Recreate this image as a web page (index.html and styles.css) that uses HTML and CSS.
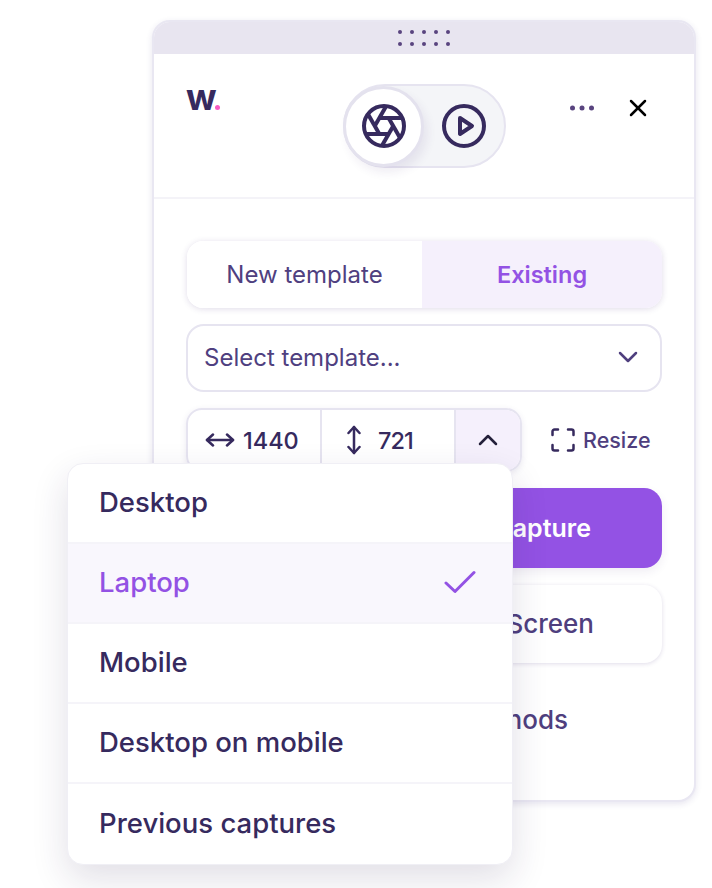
FILE: index.html
```html
<!DOCTYPE html>
<html lang="en">
<head>
  <meta charset="UTF-8">
  <meta name="viewport" content="width=device-width, initial-scale=1.0">
  <title>Capture panel</title>
  <link rel="stylesheet" href="styles.css">
</head>
<body>
  <div class="panel">
    <div class="drag-bar">
      <svg width="54" height="20" viewBox="0 0 54 20" fill="#59447f">
        <circle cx="3" cy="4" r="2"/><circle cx="15" cy="4" r="2"/><circle cx="27" cy="4" r="2"/><circle cx="39" cy="4" r="2"/><circle cx="51" cy="4" r="2"/>
        <circle cx="3" cy="16" r="2"/><circle cx="15" cy="16" r="2"/><circle cx="27" cy="16" r="2"/><circle cx="39" cy="16" r="2"/><circle cx="51" cy="16" r="2"/>
      </svg>
    </div>

    <div class="header">
      <div class="logo">w<span class="logo-dot"></span></div>

      <div class="mode-toggle">
        <div class="mode-knob">
          <svg class="mode-icon" viewBox="0 0 24 24">
            <circle cx="12" cy="12" r="10"/>
            <line x1="14.31" y1="8" x2="20.05" y2="17.94"/>
            <line x1="9.69" y1="8" x2="21.17" y2="8"/>
            <line x1="7.38" y1="12" x2="13.12" y2="2.06"/>
            <line x1="9.69" y1="16" x2="3.95" y2="6.06"/>
            <line x1="14.31" y1="16" x2="2.83" y2="16"/>
            <line x1="16.62" y1="12" x2="10.88" y2="21.94"/>
          </svg>
        </div>
        <div class="mode-other">
          <svg class="mode-icon" viewBox="0 0 24 24">
            <circle cx="12" cy="12" r="10"/>
            <polygon points="10 8 16 12 10 16"/>
          </svg>
        </div>
      </div>

      <div class="header-actions">
        <svg width="24" height="6" viewBox="0 0 24 6" fill="#59447f">
          <circle cx="2.500" cy="3" r="2.500"/><circle cx="12" cy="3" r="2.500"/><circle cx="21.500" cy="3" r="2.500"/>
        </svg>
        <svg class="close-icon" width="18" height="18" viewBox="0 0 18 18">
          <line x1="2" y1="2" x2="16" y2="16"/>
          <line x1="16" y1="2" x2="2" y2="16"/>
        </svg>
      </div>
    </div>

    <div class="content">
      <div class="tabs">
        <div class="tab">New template</div>
        <div class="tab tab-active">Existing</div>
      </div>

      <div class="select">
        <span>Select template...</span>
        <svg class="chevron" width="20" height="12" viewBox="0 0 20 12">
          <polyline points="2 2 10 10 18 2"/>
        </svg>
      </div>

      <div class="size-row">
        <div class="size-group">
          <div class="size-cell size-width">
            <svg class="size-icon" width="30" height="14" viewBox="0 0 30 14">
              <line x1="2" y1="7" x2="28" y2="7"/>
              <polyline points="8 1.500 2 7 8 12.500"/>
              <polyline points="22 1.500 28 7 22 12.500"/>
            </svg>
            <span>1440</span>
          </div>
          <div class="size-cell size-height">
            <svg class="size-icon" width="14" height="30" viewBox="0 0 14 30">
              <line x1="7" y1="2" x2="7" y2="28"/>
              <polyline points="1.500 8 7 2 12.500 8"/>
              <polyline points="1.500 22 7 28 12.500 22"/>
            </svg>
            <span class="size-narrow">721</span>
          </div>
          <div class="size-toggle">
            <svg class="chevron-up" width="20" height="12" viewBox="0 0 20 12">
              <polyline points="2 10 10 2 18 10"/>
            </svg>
          </div>
        </div>
        <div class="resize">
          <svg class="resize-icon" width="24" height="24" viewBox="0 0 24 24">
            <path d="M1.500 7V3.500a2 2 0 0 1 2-2H7"/>
            <path d="M17 1.500h3.500a2 2 0 0 1 2 2V7"/>
            <path d="M22.500 17v3.500a2 2 0 0 1-2 2H17"/>
            <path d="M7 22.500H3.500a2 2 0 0 1-2-2V17"/>
          </svg>
          <span>Resize</span>
        </div>
      </div>

      <div class="btn btn-primary">Capture</div>
      <div class="btn btn-secondary">Full Screen</div>
      <div class="btn-link">Other methods</div>
    </div>
  </div>

  <div class="dropdown">
    <div class="dropdown-item">Desktop</div>
    <div class="dropdown-item dropdown-item-active">
      <span>Laptop</span>
      <svg class="check" width="32" height="24" viewBox="0 0 32 24">
        <polyline points="2 13 11 21.500 30 2.500"/>
      </svg>
    </div>
    <div class="dropdown-item">Mobile</div>
    <div class="dropdown-item">Desktop on mobile</div>
    <div class="dropdown-item">Previous captures</div>
  </div>
</body>
</html>
```

FILE: styles.css
```css
* {
  box-sizing: border-box;
  margin: 0;
  padding: 0;
  font-family: 'Inter', sans-serif;
}

body {
  background: white;
  width: 712px;
  height: 888px;
  padding: 20px 0 0 152px;
  position: relative;
  overflow: hidden;
}

.panel {
  width: 544px;
  height: 782px;
  background: white;
  border: 2px solid #e9e7f2;
  border-radius: 18px;
  box-shadow: 0 2px 6px rgba(60, 40, 120, 0.12);
  overflow: hidden;
}

.drag-bar {
  height: 32px;
  background: #e8e5f0;
  display: flex;
  justify-content: center;
  align-items: center;
}

.header {
  height: 145px;
  border-bottom: 2px solid #f4f3f8;
  display: flex;
  align-items: flex-start;
  padding-top: 30px;
  padding-left: 32px;
}

.logo {
  width: 157px;
  height: 26px;
  display: flex;
  font-size: 36px;
  line-height: 26px;
  font-weight: 700;
  color: #362a5e;
  letter-spacing: -1px;
}

.logo-dot {
  width: 5px;
  height: 5px;
  margin-top: 21px;
  margin-left: -1px;
  border-radius: 50%;
  background: #f55cc4;
}

.mode-toggle {
  width: 163px;
  height: 84px;
  border: 2px solid #e6e4f0;
  border-radius: 42px;
  background: #f4f5f8;
  display: flex;
  align-items: center;
}

.mode-knob {
  width: 81px;
  height: 81px;
  margin-left: -2px;
  border: 3px solid #e4e2ee;
  border-radius: 50%;
  background: white;
  box-shadow: 4px 6px 10px rgba(60, 40, 120, 0.08);
  display: flex;
  justify-content: center;
  align-items: center;
}

.mode-other {
  flex: 1;
  display: flex;
  justify-content: center;
}

.mode-icon {
  width: 48px;
  height: 48px;
  fill: none;
  stroke: #362a5e;
  stroke-width: 2;
  stroke-linejoin: round;
}

.header-actions {
  display: flex;
  align-items: center;
  gap: 35px;
  margin-left: 64px;
  margin-top: 15px;
}

.close-icon line {
  stroke: black;
  stroke-width: 2.500;
  stroke-linecap: round;
}

.content {
  padding: 42px 32px 0 33px;
}

.tabs {
  height: 67px;
  display: flex;
  border-radius: 16px;
  overflow: hidden;
  box-shadow: 0 1px 6px rgba(60, 40, 120, 0.16);
}

.tab {
  display: flex;
  justify-content: center;
  align-items: center;
  font-size: 24px;
  font-weight: 400;
  color: #4f4080;
  background: white;
  width: 235px;
}

.tab-active {
  flex: 1;
  background: #f5f0fc;
  color: #9352e4;
  font-size: 23.500px;
  font-weight: 600;
}

.select {
  height: 68px;
  margin-top: 16px;
  margin-left: -1px;
  border: 2px solid #e6e4f0;
  border-radius: 18px;
  display: flex;
  justify-content: space-between;
  align-items: center;
  padding: 0 22px 2px 16px;
  font-size: 24px;
  font-weight: 400;
  color: #4f4080;
}

.chevron polyline,
.chevron-up polyline {
  fill: none;
  stroke-width: 2.500;
  stroke-linecap: round;
  stroke-linejoin: round;
}

.chevron polyline {
  stroke: #4f3f7e;
}

.chevron-up polyline {
  stroke: #24203a;
}

.size-row {
  height: 64px;
  margin-top: 16px;
  display: flex;
  align-items: stretch;
}

.size-group {
  width: 336px;
  margin-left: -1px;
  display: flex;
  border: 2px solid #e6e4f0;
  border-radius: 16px;
  overflow: hidden;
  box-shadow: 0 2px 6px rgba(60, 40, 120, 0.1);
}

.size-cell {
  display: flex;
  align-items: center;
  border-right: 2px solid #e6e4f0;
  font-size: 23.500px;
  font-weight: 500;
  color: #362a5e;
}

.size-width {
  width: 134px;
  gap: 8px;
  padding-left: 17px;
}

.size-height {
  width: 134px;
  gap: 17px;
  padding-left: 25px;
}

.size-narrow {
  letter-spacing: -1px;
}

.size-toggle {
  flex: 1;
  background: #f5f0fc;
  display: flex;
  justify-content: center;
  align-items: center;
}

.size-icon * {
  fill: none;
  stroke: #362a5e;
  stroke-width: 2.500;
  stroke-linecap: round;
  stroke-linejoin: round;
}

.resize {
  display: flex;
  align-items: center;
  gap: 8px;
  margin-left: 29px;
  font-size: 21.500px;
  font-weight: 500;
  color: #4f3f7e;
}

.resize-icon path {
  fill: none;
  stroke: #362a5e;
  stroke-width: 2.500;
  stroke-linecap: round;
}

/* labels sit to the right, the reference keeps their start behind the dropdown */
.btn {
  display: flex;
  justify-content: flex-end;
  align-items: center;
  font-size: 25px;
}

.btn-primary {
  height: 80px;
  margin-top: 16px;
  padding-right: 71px;
  border-radius: 18px;
  background: #9352e4;
  color: white;
  font-weight: 600;
  box-shadow: 0 4px 10px rgba(60, 40, 120, 0.08);
}

.btn-secondary {
  height: 78px;
  margin-top: 17px;
  padding-right: 68px;
  padding-bottom: 2px;
  border-radius: 18px;
  background: white;
  color: #4f3f7e;
  font-size: 26px;
  font-weight: 500;
  box-shadow: 0 1px 4px rgba(60, 40, 120, 0.16);
}

.btn-link {
  margin-top: 41px;
  padding-right: 94px;
  text-align: right;
  font-size: 26px;
  font-weight: 500;
  color: #4f3f7e;
}

.dropdown {
  position: absolute;
  left: 67px;
  top: 463px;
  width: 446px;
  height: 402px;
  background: white;
  border: 1px solid #f0eff5;
  border-radius: 16px;
  box-shadow: 0 14px 36px rgba(40, 30, 80, 0.14);
  overflow: hidden;
}

.dropdown-item {
  height: 80px;
  padding: 0 36px 2px 31px;
  display: flex;
  justify-content: space-between;
  align-items: center;
  border-bottom: 2px solid #f5f4f9;
  font-size: 27.500px;
  font-weight: 500;
  color: #362a5e;
}

.dropdown-item:last-child {
  border-bottom: none;
}

.dropdown-item-active {
  background: #f9f7fd;
  color: #9352e4;
}

.check polyline {
  fill: none;
  stroke: #9352e4;
  stroke-width: 3;
  stroke-linecap: round;
  stroke-linejoin: round;
}
```
